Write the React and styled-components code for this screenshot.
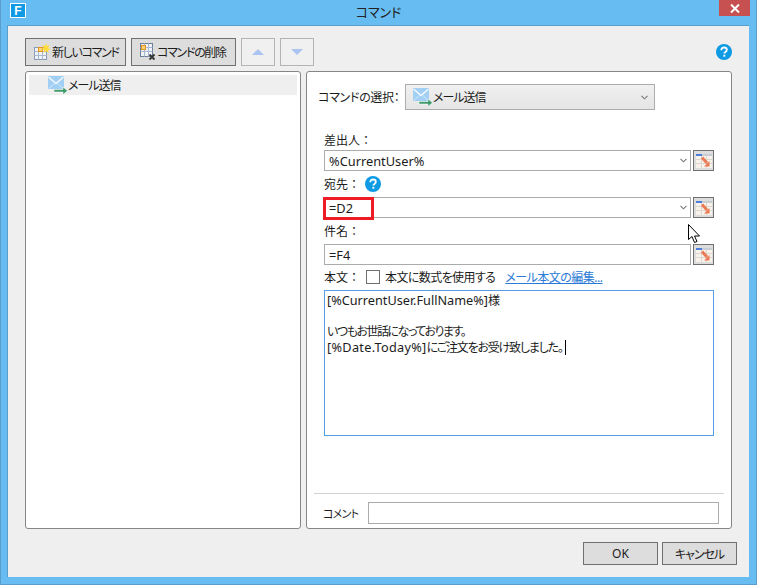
import React from "react";
import styled, { createGlobalStyle } from "styled-components";

const FONT = `"Noto Sans", "Noto Sans CJK JP", sans-serif`;

const GlobalStyle = createGlobalStyle`
  html, body {
    margin: 0;
    padding: 0;
    width: 757px;
    height: 585px;
    overflow: hidden;
    background: #67bdf1;
  }
  * {
    box-sizing: border-box;
  }
  svg {
    flex: none;
  }
`;

const MailIcon = () => (
  <svg width="20" height="18" viewBox="0 0 20 18">
    <rect x="0" y="0" width="16" height="13" fill="#a2cff4" />
    <path d="M0.500 1l7.500 6.500L15.500 1" fill="none" stroke="#f4faff" strokeWidth="1.500" />
    <path d="M1 12.500l5-5M15 12.500l-5-5" stroke="#d6ebfb" />
    <path d="M6 13.500h9V11l4.500 3.800L15 18.500V16H6z" fill="#3f9a6c" stroke="#fff" strokeWidth="0.500" />
  </svg>
);

const NewIcon = () => (
  <svg width="17" height="18" viewBox="0 0 17 18">
    <rect x="0.5" y="4.5" width="12" height="12" fill="#eef3fa" stroke="#8c9bb5" />
    <path d="M0.5 8.5h12M0.5 12.5h12M4.5 4.5v12M8.500 4.500v12" stroke="#aab8d0" />
    <rect x="4.500" y="4.500" width="4" height="4" fill="#ffd27a" stroke="#e89420" />
    <path d="M12 0l1 3 3-1-2 3 3 1.500-3 .5 .5 3-2.500-2-2.500 2 .5-3-3-.5 3-1.500-2-3 3 1z" fill="#ffdc3c" />
  </svg>
);

const DeleteIcon = () => (
  <svg width="16" height="18" viewBox="0 0 16 18">
    <rect x="0.500" y="0.500" width="12" height="13" fill="#eef3fa" stroke="#6f7f99" />
    <path d="M0.500 4.500h12M0.500 8.500h12M4.500 0.500v13M8.500 0.500v13" stroke="#aab8d0" />
    <rect x="1.500" y="2.500" width="4" height="4" fill="#ffd27a" stroke="#e89420" />
    <path d="M9.500 11.500l5 5M14.500 11.500l-5 5" stroke="#333" strokeWidth="1.800" />
  </svg>
);

const PickIcon = () => (
  <svg width="16" height="14" viewBox="0 0 16 14">
    <rect x="0" y="0" width="16" height="14" fill="#f9f2ea" />
    <path d="M0 5.500h16M0 9.500h16M5.500 2v12M10.500 2v12" stroke="#dcd6d0" />
    <rect x="0" y="0" width="6" height="2" fill="#4a7fdc" />
    <rect x="6" y="0" width="10" height="2" fill="#c9cdd4" />
    <path d="M6 3.500l5 5.500" stroke="#ea7a55" strokeWidth="3" />
    <path d="M13.500 7v5.500H8z" fill="#ea7a55" />
  </svg>
);

const HelpIcon = () => (
  <svg width="16" height="16" viewBox="0 0 16 16">
    <circle cx="8" cy="8" r="8" fill="#0f9be4" />
    <path d="M5.300 6.200c0-1.700 1.200-2.700 2.800-2.700s2.700.9 2.700 2.300c0 1.100-.6 1.700-1.400 2.200-.7.400-1 .8-1 1.500" fill="none" stroke="#fff" strokeWidth="1.800" />
    <rect x="7.400" y="10.800" width="1.900" height="1.900" fill="#fff" />
  </svg>
);

const Chevron = () => (
  <svg width="7" height="5" viewBox="0 0 7 5">
    <path d="M0.500 0.800l3 3 3-3" fill="none" stroke="#777" strokeWidth="1.100" />
  </svg>
);

const Dialog = styled.div`
  width: 757px;
  height: 585px;
  background: #67bdf1;
  border: 1px solid #5a9fcb;
  border-top: none;
  display: flex;
  flex-direction: column;
  font-family: ${FONT};
  font-feature-settings: "palt";
  font-size: 12px;
  color: #1c1c1c;
`;

const TitleBar = styled.div`
  height: 25px;
  flex: none;
  display: flex;
  align-items: flex-start;
  padding-left: 9px;
`;

const Logo = styled.div`
  width: 16px;
  height: 15px;
  margin-top: 3px;
  background: #fff;
  padding: 1px;
  & > span {
    display: flex;
    width: 100%;
    height: 100%;
    align-items: center;
    justify-content: center;
    background: #0f9be4;
    color: #fff;
    font: bold 12px "Liberation Sans", sans-serif;
  }
`;

const Title = styled.div`
  flex: 1;
  text-align: center;
  font-size: 13px;
  line-height: 24px;
  color: #222;
  padding-left: 12px;
`;

const CloseButton = styled.div`
  width: 31px;
  height: 16px;
  margin-right: 6px;
  background: #c75050;
  display: flex;
  align-items: center;
  justify-content: center;
`;

const Client = styled.div`
  flex: none;
  width: 742px;
  height: 552px;
  margin-left: 6px;
  background: #efefef;
  border-left: 1px solid #5a9fcb;
  border-top: 1px solid #5a9fcb;
  padding: 12px 0 0 17px;
  display: flex;
  flex-direction: column;
`;

const Toolbar = styled.div`
  display: flex;
  align-items: center;
  gap: 5px;
  height: 28px;
  width: 707px;
`;

const ToolButton = styled.div`
  height: 28px;
  width: ${(p) => p.$w}px;
  display: flex;
  align-items: center;
  gap: 1px;
  padding-left: 8px;
  background: #dddddd;
  border: 1px solid #707070;
  white-space: nowrap;
  letter-spacing: -1.300px;
`;

const ArrowButton = styled.div`
  width: 34px;
  height: 28px;
  background: #f0f0f0;
  border: 1px solid #b4b4b4;
  display: flex;
  align-items: center;
  justify-content: center;
`;

const Triangle = styled.div`
  width: 0;
  height: 0;
  border-left: 6.500px solid transparent;
  border-right: 6.500px solid transparent;
  ${(p) => (p.$down ? "border-top" : "border-bottom")}: 6px solid #a9c4f0;
`;

const HelpSlot = styled.div`
  margin-left: auto;
  display: flex;
`;

const Panels = styled.div`
  display: flex;
  gap: 5px;
  margin-top: 5px;
  height: 458px;
`;

const Panel = styled.div`
  background: #fff;
  border: 1px solid #868686;
  border-radius: 3px;
  width: ${(p) => p.$w}px;
`;

const TreePanel = styled(Panel)`
  padding: 3px;
`;

const TreeItem = styled.div`
  height: 20px;
  background: #efefef;
  display: flex;
  align-items: center;
  padding-left: 19px;
  letter-spacing: -1px;
`;

const FormPanel = styled(Panel)`
  display: flex;
  flex-direction: column;
`;

const CommandRow = styled.div`
  display: flex;
  align-items: center;
  margin-top: 12px;
  padding-left: 11px;
  height: 26px;
`;

const CommandLabel = styled.div`
  width: 87px;
  white-space: nowrap;
  letter-spacing: -0.3px;
`;

const CommandSelect = styled.div`
  width: 250px;
  height: 26px;
  background: linear-gradient(#f0f0f0, #e5e5e5);
  border: 1px solid #acacac;
  display: flex;
  align-items: center;
  padding: 0 6px 0 7px;
  letter-spacing: -1px;
  & > svg:last-child {
    margin-left: auto;
  }
`;

const Fields = styled.div`
  margin: 19px 0 0 17px;
  width: 390px;
  display: flex;
  flex-direction: column;
  font-feature-settings: normal;
`;

const FieldLabel = styled.div`
  height: ${(p) => p.$h}px;
  display: flex;
  align-items: center;
  gap: 5px;
`;

const FieldRow = styled.div`
  display: flex;
  gap: 2px;
  height: 21px;
`;

const Input = styled.div`
  position: relative;
  flex: 1;
  height: 21px;
  background: #fff;
  border: 1px solid #ababab;
  display: flex;
  align-items: center;
  justify-content: space-between;
  padding: 0 3px 0 4px;
  font-size: 12.800px;
`;

const RedMark = styled.div`
  position: absolute;
  left: -2px;
  top: -1px;
  width: 51px;
  height: 23px;
  border: 3px solid #ee1c25;
`;

const PickButton = styled.div`
  width: 21px;
  height: 21px;
  flex: none;
  background: #dddddd;
  border: 1px solid #707070;
  display: flex;
  align-items: center;
  justify-content: center;
`;

const BodyHead = styled.div`
  height: 25px;
  display: flex;
  align-items: center;
  padding-bottom: 1px;
`;

const BodyLabel = styled.div`
  width: 42px;
`;

const Check = styled.div`
  width: 14px;
  height: 14px;
  background: #fff;
  border: 1px solid #707070;
  margin-right: 5px;
`;

const CheckText = styled.span`
  font-feature-settings: "palt";
  letter-spacing: -0.600px;
`;

const EditLink = styled.a`
  margin-left: 10px;
  color: #2a7ad6;
  text-decoration: underline;
  font-feature-settings: "palt";
  letter-spacing: -0.500px;
`;

const BodyArea = styled.div`
  height: 146px;
  background: #fff;
  border: 1px solid #569de5;
  padding: 2px 2px;
  line-height: 15.600px;
  font-size: 12.700px;
`;

const Line = styled.div`
  min-height: 15.600px;
  white-space: nowrap;
  display: flex;
  align-items: center;
`;

const Latin = styled.span`
  letter-spacing: ${(p) => p.$track || 0}px;
`;

const Kana = styled.span`
  font-size: 12px;
  font-feature-settings: "palt";
  letter-spacing: ${(p) => p.$track ?? -1.5}px;
`;

const Caret = styled.span`
  display: inline-block;
  width: 1px;
  height: 15px;
  background: #000;
  margin-left: 2px;
`;

const CommentFoot = styled.div`
  margin: auto 7px 0;
  border-top: 1px solid #d2d2d2;
  padding: 7px 5px 4px 9px;
  display: flex;
  align-items: center;
  height: 35px;
`;

const CommentLabel = styled.div`
  width: 45px;
  font-size: 11px;
  letter-spacing: -0.700px;
`;

const CommentInput = styled.div`
  width: 351px;
  height: 22px;
  background: #fff;
  border: 1px solid #ababab;
`;

const Actions = styled.div`
  display: flex;
  justify-content: flex-end;
  gap: 4px;
  width: 712px;
  margin-top: 13px;
`;

const ActionButton = styled.div`
  width: 75px;
  height: 23px;
  background: #dddddd;
  border: 1px solid #707070;
  display: flex;
  align-items: center;
  justify-content: center;
  letter-spacing: ${(p) => p.$track || 0}px;
`;

const Pointer = styled.svg`
  position: absolute;
  left: 688px;
  top: 224px;
`;

const Field = ({ children, mark, combo }) => (
  <FieldRow>
    <Input>
      <span>{children}</span>
      {combo && <Chevron />}
      {mark && <RedMark />}
    </Input>
    <PickButton>
      <PickIcon />
    </PickButton>
  </FieldRow>
);

export default function App() {
  return (
    <>
      <GlobalStyle />
      <Dialog>
        <TitleBar>
          <Logo>
            <span>F</span>
          </Logo>
          <Title>コマンド</Title>
          <CloseButton>
            <svg width="10" height="9" viewBox="0 0 10 9">
              <path d="M1 0.500l8 8M9 0.500l-8 8" stroke="#fff" strokeWidth="2" />
            </svg>
          </CloseButton>
        </TitleBar>
        <Client>
          <Toolbar>
            <ToolButton $w={101}>
              <NewIcon />
              新しいコマンド
            </ToolButton>
            <ToolButton $w={105}>
              <DeleteIcon />
              コマンドの削除
            </ToolButton>
            <ArrowButton>
              <Triangle />
            </ArrowButton>
            <ArrowButton>
              <Triangle $down />
            </ArrowButton>
            <HelpSlot>
              <HelpIcon />
            </HelpSlot>
          </Toolbar>
          <Panels>
            <TreePanel $w={276}>
              <TreeItem>
                <MailIcon />
                メール送信
              </TreeItem>
            </TreePanel>
            <FormPanel $w={426}>
              <CommandRow>
                <CommandLabel>コマンドの選択：</CommandLabel>
                <CommandSelect>
                  <MailIcon />
                  メール送信
                  <Chevron />
                </CommandSelect>
              </CommandRow>
              <Fields>
                <FieldLabel $h={21}>差出人：</FieldLabel>
                <Field combo>%CurrentUser%</Field>
                <FieldLabel $h={26}>
                  宛先：
                  <HelpIcon />
                </FieldLabel>
                <Field combo mark>
                  =D2
                </Field>
                <FieldLabel $h={26}>件名：</FieldLabel>
                <Field>=F4</Field>
                <BodyHead>
                  <BodyLabel>本文：</BodyLabel>
                  <Check />
                  <CheckText>本文に数式を使用する</CheckText>
                  <EditLink>メール本文の編集...</EditLink>
                </BodyHead>
                <BodyArea>
                  <Line>
                    <Latin>[%CurrentUser.FullName%]</Latin>
                    <Kana>様</Kana>
                  </Line>
                  <Line />
                  <Line>
                    <Kana>いつもお世話になっております。</Kana>
                  </Line>
                  <Line>
                    <Latin $track={0.3}>[%Date.Today%]</Latin>
                    <Kana $track={-1.2}>にご注文をお受け致しました。</Kana>
                    <Caret />
                  </Line>
                </BodyArea>
              </Fields>
              <CommentFoot>
                <CommentLabel>コメント</CommentLabel>
                <CommentInput />
              </CommentFoot>
            </FormPanel>
          </Panels>
          <Actions>
            <ActionButton>OK</ActionButton>
            <ActionButton $track={-1}>キャンセル</ActionButton>
          </Actions>
        </Client>
      </Dialog>
      <Pointer width="12" height="20" viewBox="0 0 12 20">
        <path d="M0.500 0.500v15l3.500-3 2.500 6 2.500-1-2.500-5.500h5z" fill="#fff" stroke="#000" />
      </Pointer>
    </>
  );
}
